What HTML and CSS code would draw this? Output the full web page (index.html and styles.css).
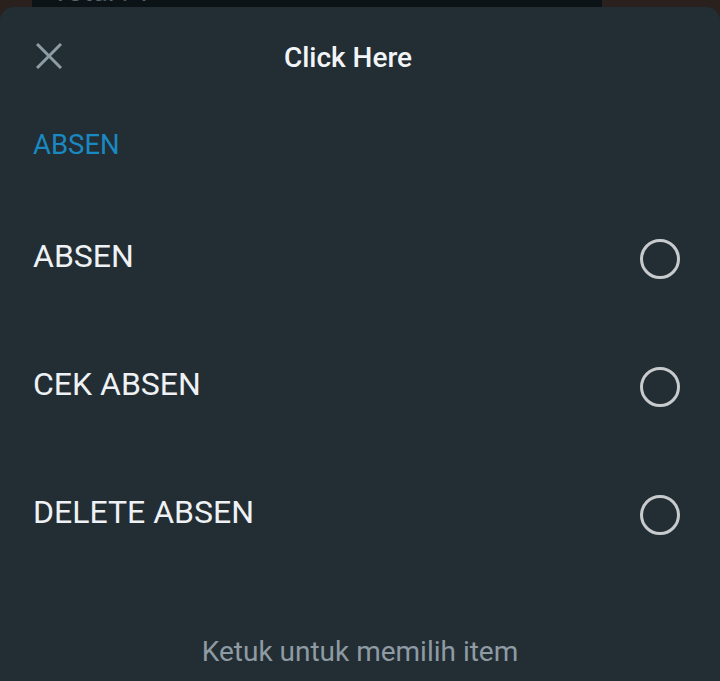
FILE: index.html
```html
<!DOCTYPE html>
<html>
<head>
<meta charset="utf-8">
<link rel="stylesheet" href="styles.css">
</head>
<body>
<div class="backdrop">
  <div class="bg-card"><span class="bg-text">Total : 1</span></div>
</div>
<div class="sheet">
  <div class="header">
    <svg class="close" width="26" height="26" viewBox="0 0 26 26"><path d="M1 1L25 25M25 1L1 25" stroke="#8d9ca5" stroke-width="3" fill="none"/></svg>
    <div class="title">Click Here</div>
  </div>
  <div class="section">ABSEN</div>
  <div class="list">
    <div class="row"><span class="label">ABSEN</span><span class="radio"></span></div>
    <div class="row"><span class="label">CEK ABSEN</span><span class="radio"></span></div>
    <div class="row"><span class="label">DELETE ABSEN</span><span class="radio"></span></div>
  </div>
  <div class="footer">Ketuk untuk memilih item</div>
</div>
</body>
</html>
```
FILE: styles.css
```css
html, body {
  margin: 0;
  padding: 0;
  width: 720px;
  height: 681px;
  overflow: hidden;
  background: #2a201d;
  font-family: Roboto, "Noto Sans", sans-serif;
}
.backdrop {
  height: 7px;
  display: flex;
  overflow: hidden;
}
.bg-card {
  margin-left: 32px;
  width: 570px;
  background: #0b1316;
  position: relative;
  overflow: hidden;
}
.bg-text {
  position: absolute;
  left: 20px;
  top: -24px;
  font-size: 28px;
  line-height: 32px;
  color: #59636a;
}
.sheet {
  background: #232d34;
  border-radius: 14px 14px 0 0;
  height: 674px;
  display: flex;
  flex-direction: column;
}
.header {
  height: 98px;
  display: flex;
  align-items: center;
  justify-content: center;
  position: relative;
}
.close {
  position: absolute;
  left: 36px;
  top: 36px;
}
.title {
  color: #f2f5f7;
  font-size: 28px;
  font-weight: 500;
  margin-right: 24px;
  margin-top: 2px;
}
.section {
  color: #1a88c1;
  font-size: 27.5px;
  padding-left: 33px;
  height: 90px;
  line-height: 80px;
}
.list {
  display: flex;
  flex-direction: column;
}
.row {
  height: 128px;
  display: flex;
  align-items: center;
  justify-content: space-between;
  padding: 0 40px 0 33px;
}
.label {
  color: #eef2f5;
  font-size: 32px;
  margin-top: -6px;
}
.radio {
  width: 34px;
  height: 34px;
  border: 3px solid #c8cbcd;
  border-radius: 50%;
}
.footer {
  margin-top: auto;
  height: 44px;
  text-align: center;
  color: #8e9ba3;
  font-size: 28px;
  line-height: 30px;
}
```
